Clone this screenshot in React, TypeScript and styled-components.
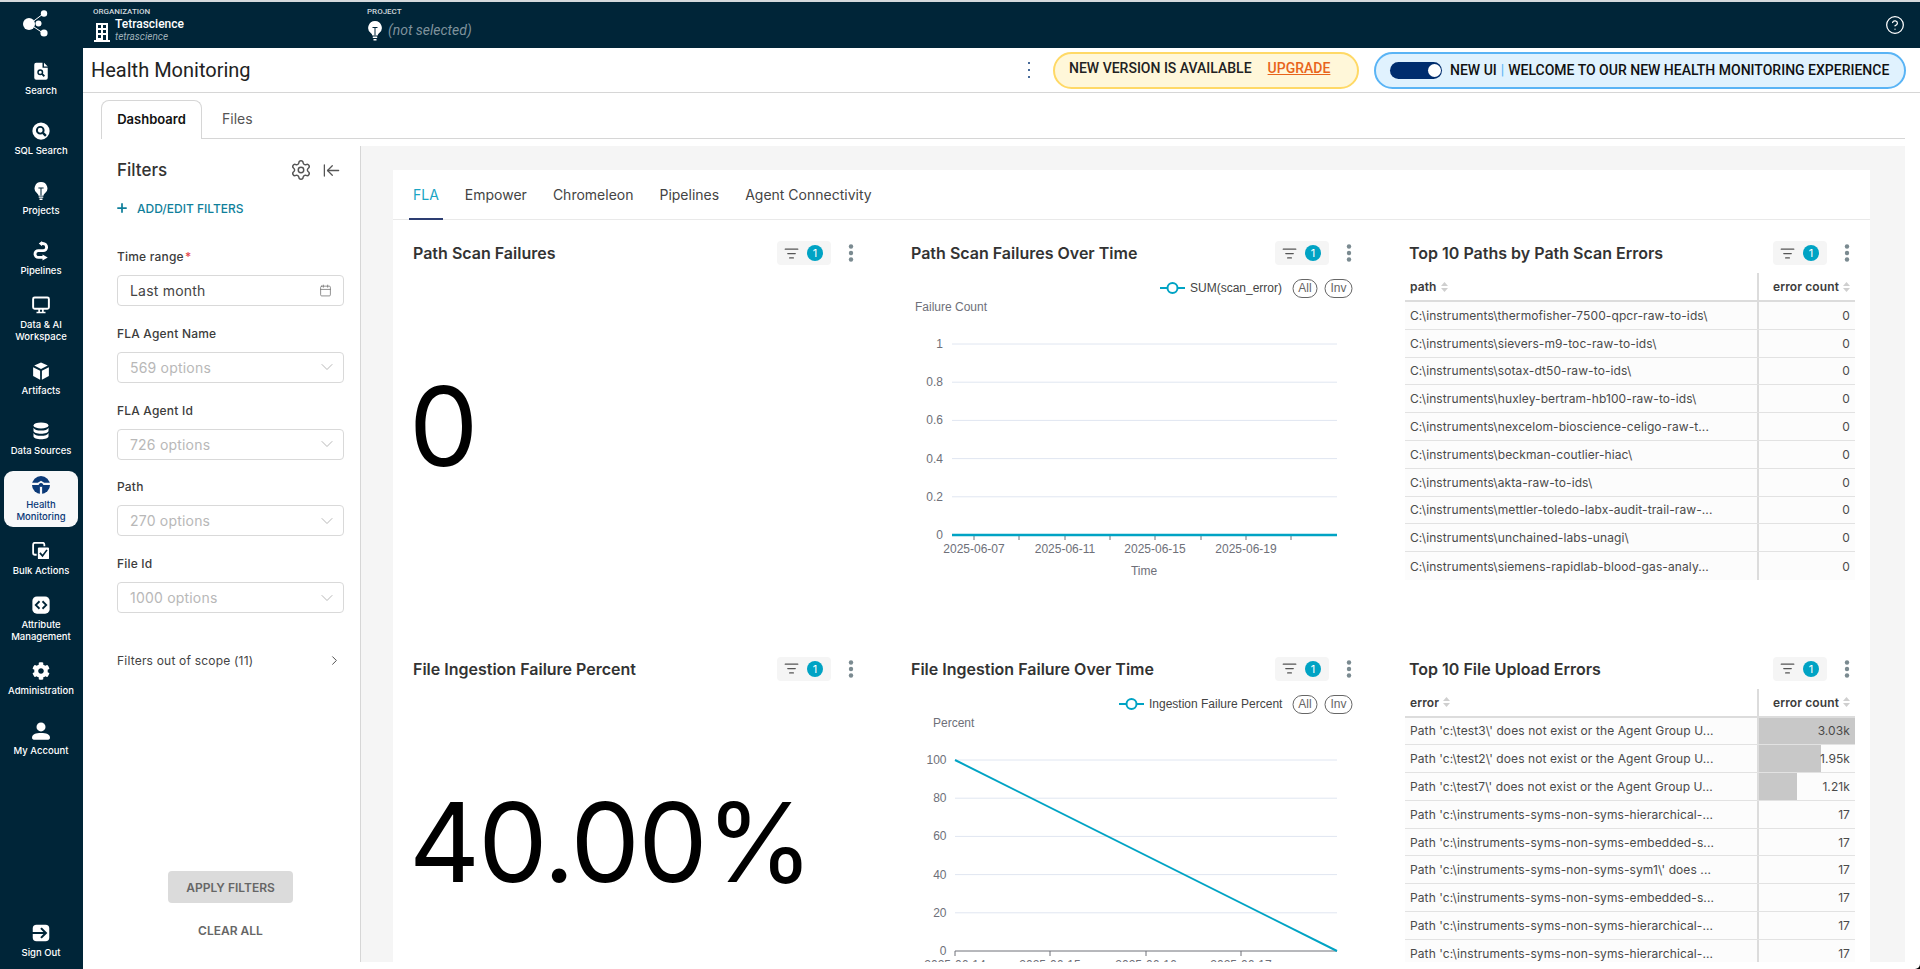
import styled, { createGlobalStyle } from "styled-components"
import { ArrowLeftToLine, Calendar, ChevronDown, ChevronRight, CircleHelp, ListFilter, Plus, Settings } from "lucide-react"
import { FaCog } from "react-icons/fa"

const NAVY = "#002538"
const TEAL = "#00a3c4"

const GlobalStyle = createGlobalStyle`
html, body {
    margin: 0;
    padding: 0;
    height: 100%;
    background: #000;
    overflow: hidden;
}
body {
    font-family: Inter, "Liberation Sans", sans-serif;
    color: #333;
}
* {
    box-sizing: border-box;
}
`

const Shell = styled.div`
display: flex;
height: 969px;
width: 1920px;
background: #fff;
border-top: 2px solid #d5d9dc;
border-bottom-right-radius: 5px;
overflow: hidden;
`

/* sidebar */

const Sidebar = styled.nav`
width: 83px;
flex: none;
background: ${NAVY};
display: flex;
flex-direction: column;
`

const Logo = styled.div`
height: 47px;
flex: none;
display: flex;
align-items: center;
justify-content: center;
padding: 0 4px 4px 0;
`

const NavItem = styled.a<{ $active?: boolean; $bottom?: boolean }>`
flex: none;
width: 74px;
height: 56px;
margin: 2px 4px;
margin-top: ${p => p.$bottom ? "auto" : "2px"};
margin-bottom: ${p => p.$bottom ? "0" : "2px"};
border-radius: 9px;
display: flex;
flex-direction: column;
align-items: center;
justify-content: center;
gap: 5px;
background: ${p => p.$active ? "#f7f8f9" : "transparent"};
color: ${p => p.$active ? "#0b3a78" : "#fff"};
svg {
    flex: none;
    display: block;
}
`

const NavLabel = styled.span`
font-size: 9.5px;
line-height: 12px;
font-weight: 500;
text-align: center;
white-space: pre-line;
`

/* main column */

const Main = styled.div`
flex: 1;
min-width: 0;
display: flex;
flex-direction: column;
`

const TopBar = styled.header`
height: 46px;
flex: none;
background: ${NAVY};
display: flex;
align-items: stretch;
padding: 0 15px 0 10px;
color: #fff;
font-family: Roboto, sans-serif;
`

const TopGroup = styled.div<{ $width?: number }>`
width: ${p => p.$width ? p.$width + "px" : "auto"};
padding-top: 5px;
`

const TopCaption = styled.div`
font-size: 8px;
line-height: 9px;
font-weight: 500;
color: #cfd8dc;
`

const TopRow = styled.div`
display: flex;
align-items: center;
gap: 5px;
margin-top: 1px;
`

const TopIcon = styled.div`
display: flex;
padding: 4px 0 0 1px;
`

const OrgName = styled.div`
font-size: 12px;
line-height: 14px;
font-weight: 500;
`

const OrgSlug = styled.div`
font-size: 10px;
line-height: 11px;
font-style: italic;
color: #9fb0b9;
`

const NoProject = styled.div`
font-size: 14px;
font-style: italic;
color: #7f929c;
margin: 2px 0 0 1px;
`

const HelpButton = styled.div`
margin-left: auto;
align-self: center;
display: flex;
color: #fff;
`

const TitleBar = styled.div`
height: 45px;
flex: none;
border-bottom: 1px solid #d6d6d6;
display: flex;
align-items: center;
padding: 0 14px 0 8px;
font-family: Roboto, sans-serif;
`

const PageTitle = styled.h1`
margin: 0;
font-size: 20px;
font-weight: 400;
color: #222;
`

const TitleKebab = styled.div`
margin-left: auto;
margin-right: 20px;
display: flex;
`

const VersionPill = styled.div`
width: 306px;
height: 37px;
border-radius: 19px;
border: 2px solid #ffd966;
background: #fff7d9;
display: flex;
align-items: center;
padding: 0 0 4px 14px;
font-size: 14px;
font-weight: 500;
color: #222;
`

const UpgradeLink = styled.span`
color: #e8641b;
text-decoration: underline;
margin-left: 16px;
`

const WelcomePill = styled.div`
width: 532px;
height: 37px;
margin-left: 15px;
border-radius: 19px;
border: 2px solid #5ab4f5;
background: #e0f2fe;
display: flex;
align-items: center;
padding-left: 14px;
font-size: 14px;
font-weight: 500;
color: #111;
white-space: nowrap;
`

const Toggle = styled.div`
width: 52px;
height: 17px;
border-radius: 9px;
background: #002d6e;
display: flex;
justify-content: flex-end;
align-items: center;
padding-right: 1px;
margin-right: 8px;
`

const ToggleKnob = styled.div`
width: 13px;
height: 13px;
border-radius: 50%;
background: #fff;
`

const PillDivider = styled.span`
color: #5ab4f5;
font-weight: 400;
margin: 0 4px;
`

/* dashboard tabs */

const PageTabs = styled.div`
flex: none;
height: 39px;
margin: 7px 15px 0 18px;
display: flex;
align-items: stretch;
border-bottom: 1px solid #d6d6d6;
`

const PageTab = styled.div<{ $active?: boolean }>`
width: ${p => p.$active ? "101px" : "auto"};
height: ${p => p.$active ? "39px" : "auto"};
display: flex;
align-items: center;
justify-content: center;
padding-bottom: 2px;
font-size: ${p => p.$active ? "13px" : "14px"};
margin-left: ${p => p.$active ? "0" : "20px"};
font-weight: ${p => p.$active ? 600 : 400};
color: ${p => p.$active ? "#111" : "#555"};
background: #fff;
border: ${p => p.$active ? "1px solid #d6d6d6" : "none"};
border-bottom: none;
border-radius: 8px 8px 0 0;
`

const Body = styled.div`
flex: 1;
min-height: 0;
margin: 7px 15px 7px 0;
display: flex;
overflow: hidden;
`

/* filter panel */

const FilterPanel = styled.aside`
width: 278px;
flex: none;
border-right: 1px solid #d6d6d6;
padding: 12px 16px 23px 34px;
display: flex;
flex-direction: column;
`

const FilterHead = styled.div`
display: flex;
align-items: center;
height: 24px;
padding-right: 3px;
color: #555;
`

const FilterTitle = styled.div`
font-size: 17px;
font-weight: 500;
color: #333;
margin-right: auto;
`

const HeadIcon = styled.div`
display: flex;
margin-left: 10px;
`

const AddFilters = styled.div`
display: flex;
align-items: center;
gap: 8px;
height: 16px;
margin: 18px 0 0 -2px;
font-size: 12px;
font-weight: 500;
color: #0f7f9b;
`

const FilterField = styled.div<{ $first?: boolean }>`
margin-top: ${p => p.$first ? "33px" : "19.75px"};
`

const FieldLabel = styled.div`
font-size: 12px;
line-height: 16px;
font-weight: 500;
letter-spacing: 0.2px;
color: #3c3c3c;
margin-bottom: 10px;
`

const Required = styled.span`
color: #e5484d;
margin-left: 1px;
`

const SelectBox = styled.div<{ $muted?: boolean }>`
height: 31px;
border: 1px solid #d9d9d9;
border-radius: 4px;
display: flex;
align-items: center;
justify-content: space-between;
padding: 0 ${p => p.$muted ? "6px" : "11px"} 0 12px;
font-size: 14px;
letter-spacing: 0.2px;
color: ${p => p.$muted ? "#b8b8b8" : "#444"};
svg {
    color: ${p => p.$muted ? "#b8b8b8" : "#777"};
}
`

const ScopeRow = styled.div`
display: flex;
align-items: center;
justify-content: space-between;
height: 16px;
margin-top: 39px;
padding-right: 2px;
font-size: 12px;
letter-spacing: 0.2px;
color: #444;
`

const ApplyButton = styled.div`
width: 125px;
height: 32px;
margin: auto auto 0;
border-radius: 4px;
background: #dbdbdb;
color: #666;
font-size: 12px;
font-weight: 600;
display: flex;
align-items: center;
justify-content: center;
`

const ClearButton = styled.div`
margin-top: 20px;
text-align: center;
font-size: 12px;
line-height: 16px;
font-weight: 600;
color: #666;
`

/* report area */

const Report = styled.main`
flex: 1;
min-width: 0;
background: #f5f5f5;
padding: 24px 35px 0 32px;
`

const Card = styled.div`
height: 100%;
background: #fff;
overflow: hidden;
`

const CardTabs = styled.div`
height: 50px;
border-bottom: 1px solid #e9e9e9;
padding-left: 16px;
display: flex;
gap: 18px;
`

const CardTab = styled.div<{ $active?: boolean }>`
height: 50px;
padding: 1px 4px 0;
display: flex;
align-items: center;
font-size: 14px;
color: ${p => p.$active ? "#1aa5c4" : "#444"};
border-bottom: 2px solid ${p => p.$active ? "#2d3e72" : "transparent"};
`

const Grid = styled.div`
display: grid;
grid-template-columns: repeat(3, 450px);
grid-auto-rows: 415.5px;
column-gap: 48px;
padding: 21px 0 0 16px;
`

const Panel = styled.section`
min-width: 0;
`

const PanelHead = styled.div`
height: 24px;
display: flex;
align-items: center;
padding-left: 4px;
`

const PanelTitle = styled.h3`
margin: 0 auto 0 0;
font-size: 16px;
font-weight: 600;
color: #333;
`

const FilterChip = styled.div`
width: 54px;
height: 24px;
border-radius: 4px;
background: #f5f5f5;
display: flex;
align-items: center;
justify-content: space-between;
padding: 0 8px 0 7px;
color: #555;
margin-right: 12px;
`

const ChipBadge = styled.div`
width: 16px;
height: 16px;
border-radius: 50%;
background: ${TEAL};
color: #fff;
font-size: 11px;
display: flex;
align-items: center;
justify-content: center;
`

const PanelKebab = styled.div`
width: 16px;
display: flex;
justify-content: center;
`

const BigNumber = styled.div`
height: 322px;
display: flex;
align-items: center;
font-size: 110px;
font-weight: 400;
letter-spacing: -1.7px;
color: #000;
`

const ChartSvg = styled.svg`
display: block;
margin-top: 5px;
font-family: "Liberation Sans", Arial, sans-serif;
font-size: 12px;
`

const Table = styled.div`
margin-top: 8px;
font-size: 12px;
color: #4a4a4a;
`

const HeadRow = styled.div`
display: grid;
grid-template-columns: 352px 98px;
height: 29px;
border-bottom: 2px solid #dcdcdc;
font-weight: 600;
color: #3c3c3c;
`

const BodyRow = styled.div`
display: grid;
grid-template-columns: 352px 98px;
height: 27.8px;
border-bottom: 1px solid #e2e2e2;
background: #fcfcfc;
&:last-child {
    border-bottom: none;
}
`

const NameCell = styled.div`
display: flex;
align-items: center;
gap: 4px;
padding-left: 5px;
white-space: nowrap;
overflow: hidden;
letter-spacing: 0.1px;
`

const ValueCell = styled.div`
position: relative;
display: flex;
align-items: center;
justify-content: flex-end;
gap: 4px;
padding-right: 5px;
border-left: 2px solid #dcdcdc;
letter-spacing: 0.1px;
`

const ValueBar = styled.div`
position: absolute;
left: 0;
top: 0;
bottom: 0;
background: #c8c8c8;
`

const ValueText = styled.span`
position: relative;
`

/* icons */

const LogoIcon = () => (
    <svg width="34" height="28" viewBox="0 0 34 28" fill="#fff">
        <circle cx="6" cy="14" r="6" />
        <circle cx="21" cy="3.5" r="3.2" />
        <circle cx="15.5" cy="13.5" r="3" />
        <circle cx="21" cy="23" r="3.6" />
        <path d="M8 13l12-9M8 15l12 8" stroke="#fff" strokeWidth="1" />
    </svg>
)

const navIcons: Record<string, React.ReactNode> = {
    search: (
        <svg width="18" height="18" viewBox="0 0 24 24">
            <path fill="#fff" d="M3 3.5A2.5 2.5 0 0 1 5.500 1H14v6.500h7V21a2.500 2.500 0 0 1-2.500 2.500h-13A2.500 2.500 0 0 1 3 21z" />
            <path fill="#fff" d="M16 1l5 5h-5z" />
            <circle cx="11" cy="13.500" r="3" fill="none" stroke={NAVY} strokeWidth="2" />
            <path d="M13.200 15.700l3.300 3.300" stroke={NAVY} strokeWidth="2.400" />
        </svg>
    ),
    sql: (
        <svg width="18" height="18" viewBox="0 0 24 24">
            <circle cx="12" cy="12" r="11.500" fill="#fff" />
            <circle cx="11" cy="11" r="4.500" fill="none" stroke={NAVY} strokeWidth="2.600" />
            <path d="M14.500 14.500l4 4" stroke={NAVY} strokeWidth="3" />
        </svg>
    ),
    bulb: (
        <svg width="18" height="18" viewBox="0 0 24 24">
            <path fill="#fff" d="M12 0a8.500 8.500 0 0 0-5 15.400c1 .8 1.600 1.700 1.700 2.800h6.600c.1-1.100.7-2 1.700-2.800A8.500 8.500 0 0 0 12 0z" />
            <path d="M8.500 8h7M12 8v10" stroke={NAVY} strokeWidth="1.400" fill="none" />
            <path d="M9 20.200h6M10 23h4" stroke="#fff" strokeWidth="1.800" />
        </svg>
    ),
    pipelines: (
        <svg width="18" height="18" viewBox="0 0 24 24" style={{ overflow: "visible" }}>
            <path d="M12 2h2.500a5 5 0 0 1 5 5 4.500 4.500 0 0 1-4.500 4.500H8.500a4.500 4.500 0 0 0 0 9H15" fill="none" stroke="#fff" strokeWidth="3.800" />
            <path fill="#fff" d="M13.500-1.500L9 2l4.500 3.500zM14 16.500l7 4-7 4z" />
        </svg>
    ),
    monitor: (
        <svg width="18" height="18" viewBox="0 0 24 24">
            <rect x="1.500" y="2" width="21" height="15" rx="2" fill="none" stroke="#fff" strokeWidth="2.600" />
            <path d="M9.500 17v4M14.500 17v4M6 22h12" stroke="#fff" strokeWidth="2.200" />
        </svg>
    ),
    cube: (
        <svg width="18" height="18" viewBox="0 0 24 24" fill="#fff">
            <path d="M12 .5l9 4.300-9 4.400-9-4.400z" />
            <path d="M1.500 7l9.300 4.600V23.500L1.500 18.500z" />
            <path d="M22.500 7l-9.300 4.600V23.500l9.300-5z" />
        </svg>
    ),
    database: (
        <svg width="18" height="18" viewBox="0 0 24 24" fill="#fff">
            <ellipse cx="12" cy="4.500" rx="10" ry="4" />
            <path d="M2 7.500c1 2.500 5 3.800 10 3.800s9-1.300 10-3.800v4c0 2.400-4.500 4-10 4s-10-1.600-10-4z" />
            <path d="M2 14.500c1 2.500 5 3.800 10 3.800s9-1.300 10-3.800v4.500c0 2.400-4.500 4-10 4s-10-1.600-10-4z" />
        </svg>
    ),
    health: (
        <svg width="18" height="18" viewBox="0 0 24 24">
            <circle cx="12" cy="12" r="12" fill="#0b3a78" />
            <path d="M0 10.500h8l4-2.500 4 2.500h8M12 13v11" fill="none" stroke="#f7f8f9" strokeWidth="3" />
            <circle cx="12" cy="12" r="2.800" fill="#0b3a78" />
        </svg>
    ),
    bulk: (
        <svg width="18" height="18" viewBox="0 0 24 24">
            <rect x="1.500" y="1" width="15" height="16" rx="2.500" fill="none" stroke="#fff" strokeWidth="2.400" />
            <rect x="7" y="6.500" width="16.500" height="17" rx="2" fill="#fff" stroke={NAVY} strokeWidth="1.600" />
            <path d="M10.500 14.500l3.500 4 6-8" fill="none" stroke={NAVY} strokeWidth="2.200" />
        </svg>
    ),
    attribute: (
        <svg width="18" height="18" viewBox="0 0 24 24">
            <rect x="0.500" y="0.500" width="23" height="23" rx="6" fill="#fff" />
            <path d="M10 7l-5 5 5 5M14 7l5 5-5 5" fill="none" stroke={NAVY} strokeWidth="2.400" />
        </svg>
    ),
    user: (
        <svg width="18" height="18" viewBox="0 0 24 24" fill="#fff">
            <circle cx="12" cy="6.500" r="6" />
            <path d="M0 21c0-5 5-6.500 12-6.500S24 16 24 21c0 1.500-1 2.500-2.500 2.500h-19C1 23.500 0 22.500 0 21z" />
        </svg>
    ),
    signout: (
        <svg width="18" height="18" viewBox="0 0 24 24">
            <rect x="1" y="1" width="22" height="22" rx="5" fill="#fff" />
            <path d="M0 12h18M12 5.500l6.500 6.500-6.500 6.500" fill="none" stroke={NAVY} strokeWidth="2.800" />
        </svg>
    ),
}

const BuildingIcon = () => (
    <svg width="16" height="20" viewBox="0 0 16 20">
        <path fill="#fff" d="M2 1h12v17H2z" />
        <path fill={NAVY} d="M4 3h3v3H4zM9 3h3v3H9zM4 8h3v3H4zM9 8h3v3H9zM4 13h3v3H4zM9 13h3v5H9z" />
        <path d="M0 19h16" stroke="#fff" strokeWidth="2" />
    </svg>
)

const ProjectBulb = () => (
    <svg width="14" height="20" viewBox="0 0 14 20">
        <path fill="#fff" d="M7 0a6.800 6.800 0 0 0-4 12.300c.8.600 1.200 1.300 1.300 2.200h5.400c.1-.9.500-1.600 1.300-2.200A6.800 6.800 0 0 0 7 0z" />
        <path d="M4.500 6.500h5M7 6.500v8" stroke={NAVY} strokeWidth="1" fill="none" />
        <path d="M4.800 16.300h4.400M5.500 18.800h3" stroke="#fff" strokeWidth="1.400" />
    </svg>
)

const KebabDots = ({ size = 2.2, gap = 6.5, color = "#7a8a90" }: { size?: number; gap?: number; color?: string }) => (
    <svg width="8" height="20" viewBox="0 0 8 20" fill={color}>
        <circle cx="4" cy={10 - gap} r={size} />
        <circle cx="4" cy="10" r={size} />
        <circle cx="4" cy={10 + gap} r={size} />
    </svg>
)

const SortIcon = () => (
    <svg width="7" height="10" viewBox="0 0 7 10" fill="#cfcfcf">
        <path d="M3.500 0L7 4H0zM3.500 10L0 6h7z" />
    </svg>
)

/* chart */

interface ChartConfig {
    yName: string
    yNameX: number
    yLabelX: number
    yLabels: string[]
    left: number
    legend: string
    legendX: number
    ticks: number[]
    dates: { x: number; label: string }[]
    xName?: string
    line: string
    lineWidth: number
}

const CHART_TOP = 74
const CHART_BOTTOM = 265
const CHART_RIGHT = 430

function LineChart({ config }: { config: ChartConfig }) {
    const step = (CHART_BOTTOM - CHART_TOP) / (config.yLabels.length - 1)
    return (
        <ChartSvg width="450" height="310" viewBox="0 0 450 310">
            <line x1={config.legendX} x2={config.legendX + 25} y1="18" y2="18" stroke={TEAL} strokeWidth="2" />
            <circle cx={config.legendX + 12.5} cy="18" r="5" fill="#fff" stroke={TEAL} strokeWidth="2" />
            <text x={config.legendX + 30} y="22" fill="#444">{config.legend}</text>
            <rect x="386" y="9.500" width="24" height="18" rx="9" fill="#fff" stroke="#666" />
            <text x="398" y="22" fill="#666" textAnchor="middle">All</text>
            <rect x="418" y="9.500" width="27" height="18" rx="9" fill="#fff" stroke="#666" />
            <text x="431.5" y="22" fill="#666" textAnchor="middle">Inv</text>
            <text x={config.yNameX} y="41" fill="#6e7079">{config.yName}</text>
            {config.yLabels.map((label, i) => {
                const y = CHART_TOP + step * i
                return (
                    <g key={label}>
                        {i < config.yLabels.length - 1 && (
                            <line x1={config.left} x2={CHART_RIGHT} y1={y} y2={y} stroke="#e0e6f1" />
                        )}
                        <text x={config.yLabelX} y={y + 4} fill="#6e7079" textAnchor="end">{label}</text>
                    </g>
                )
            })}
            <line x1={config.left} x2={CHART_RIGHT} y1={CHART_BOTTOM} y2={CHART_BOTTOM} stroke="#6e7079" />
            {config.ticks.map(x => (
                <line key={x} x1={x} x2={x} y1={CHART_BOTTOM} y2={CHART_BOTTOM + 5} stroke="#6e7079" />
            ))}
            {config.dates.map(d => (
                <text key={d.label} x={d.x} y="283" fill="#6e7079" textAnchor="middle">{d.label}</text>
            ))}
            {config.xName && <text x="237" y="305" fill="#6e7079" textAnchor="middle">{config.xName}</text>}
            <path d={config.line} fill="none" stroke={TEAL} strokeWidth={config.lineWidth} />
        </ChartSvg>
    )
}

const scanChart: ChartConfig = {
    yName: "Failure Count",
    yNameX: 8,
    yLabelX: 36,
    yLabels: ["1", "0.8", "0.6", "0.4", "0.2", "0"],
    left: 45,
    legend: "SUM(scan_error)",
    legendX: 253,
    ticks: [67, 112, 158, 203, 248, 294, 339, 384],
    dates: [
        { x: 67, label: "2025-06-07" },
        { x: 158, label: "2025-06-11" },
        { x: 248, label: "2025-06-15" },
        { x: 339, label: "2025-06-19" },
    ],
    xName: "Time",
    line: "M45 265H430",
    lineWidth: 2.5,
}

const ingestionChart: ChartConfig = {
    yName: "Percent",
    yNameX: 26,
    yLabelX: 39.5,
    yLabels: ["100", "80", "60", "40", "20", "0"],
    left: 48,
    legend: "Ingestion Failure Percent",
    legendX: 212,
    ticks: [48, 143, 239, 334],
    dates: [
        { x: 48, label: "2025-06-14" },
        { x: 143, label: "2025-06-15" },
        { x: 239, label: "2025-06-16" },
        { x: 334, label: "2025-06-17" },
    ],
    line: "M48 74L430 265",
    lineWidth: 2,
}

/* data */

const pathRows = [
    "C:\\instruments\\thermofisher-7500-qpcr-raw-to-ids\\",
    "C:\\instruments\\sievers-m9-toc-raw-to-ids\\",
    "C:\\instruments\\sotax-dt50-raw-to-ids\\",
    "C:\\instruments\\huxley-bertram-hb100-raw-to-ids\\",
    "C:\\instruments\\nexcelom-bioscience-celigo-raw-t...",
    "C:\\instruments\\beckman-coutlier-hiac\\",
    "C:\\instruments\\akta-raw-to-ids\\",
    "C:\\instruments\\mettler-toledo-labx-audit-trail-raw-...",
    "C:\\instruments\\unchained-labs-unagi\\",
    "C:\\instruments\\siemens-rapidlab-blood-gas-analy...",
].map(name => ({ name, value: "0", count: 0 }))

const uploadRows = [
    { name: "Path 'c:\\test3\\' does not exist or the Agent Group U...", value: "3.03k", count: 3030 },
    { name: "Path 'c:\\test2\\' does not exist or the Agent Group U...", value: "1.95k", count: 1950 },
    { name: "Path 'c:\\test7\\' does not exist or the Agent Group U...", value: "1.21k", count: 1210 },
    { name: "Path 'c:\\instruments-syms-non-syms-hierarchical-...", value: "17", count: 0 },
    { name: "Path 'c:\\instruments-syms-non-syms-embedded-s...", value: "17", count: 0 },
    { name: "Path 'c:\\instruments-syms-non-syms-sym1\\' does ...", value: "17", count: 0 },
    { name: "Path 'c:\\instruments-syms-non-syms-embedded-s...", value: "17", count: 0 },
    { name: "Path 'c:\\instruments-syms-non-syms-hierarchical-...", value: "17", count: 0 },
    { name: "Path 'c:\\instruments-syms-non-syms-hierarchical-...", value: "17", count: 0 },
]

const navItems = [
    { icon: "search", label: "Search" },
    { icon: "sql", label: "SQL Search" },
    { icon: "bulb", label: "Projects" },
    { icon: "pipelines", label: "Pipelines" },
    { icon: "monitor", label: "Data & AI\nWorkspace" },
    { icon: "cube", label: "Artifacts" },
    { icon: "database", label: "Data Sources" },
    { icon: "health", label: "Health\nMonitoring", active: true },
    { icon: "bulk", label: "Bulk Actions" },
    { icon: "attribute", label: "Attribute\nManagement" },
]

const filterFields = [
    { label: "FLA Agent Name", value: "569 options" },
    { label: "FLA Agent Id", value: "726 options" },
    { label: "Path", value: "270 options" },
    { label: "File Id", value: "1000 options" },
]

const cardTabs = ["FLA", "Empower", "Chromeleon", "Pipelines", "Agent Connectivity"]

function PanelHeader({ title }: { title: string }) {
    return (
        <PanelHead>
            <PanelTitle>{title}</PanelTitle>
            <FilterChip>
                <ListFilter size={15} strokeWidth={2} />
                <ChipBadge>1</ChipBadge>
            </FilterChip>
            <PanelKebab><KebabDots /></PanelKebab>
        </PanelHead>
    )
}

function DataTable({ column, rows }: { column: string; rows: { name: string; value: string; count: number }[] }) {
    const max = Math.max(...rows.map(r => r.count), 1)
    return (
        <Table>
            <HeadRow>
                <NameCell>{column} <SortIcon /></NameCell>
                <ValueCell>error count <SortIcon /></ValueCell>
            </HeadRow>
            {rows.map((row, i) => (
                <BodyRow key={i}>
                    <NameCell>{row.name}</NameCell>
                    <ValueCell>
                        {row.count > 0 && <ValueBar style={{ width: `${(row.count / max) * 100}%` }} />}
                        <ValueText>{row.value}</ValueText>
                    </ValueCell>
                </BodyRow>
            ))}
        </Table>
    )
}

export default function App() {
    return (
        <>
            <GlobalStyle />
            <Shell>
                <Sidebar>
                    <Logo><LogoIcon /></Logo>
                    {navItems.map(item => (
                        <NavItem key={item.icon} $active={item.active}>
                            {navIcons[item.icon]}
                            <NavLabel>{item.label}</NavLabel>
                        </NavItem>
                    ))}
                    <NavItem>
                        <FaCog size={18} />
                        <NavLabel>Administration</NavLabel>
                    </NavItem>
                    <NavItem>
                        {navIcons.user}
                        <NavLabel>My Account</NavLabel>
                    </NavItem>
                    <NavItem $bottom>
                        {navIcons.signout}
                        <NavLabel>Sign Out</NavLabel>
                    </NavItem>
                </Sidebar>
                <Main>
                    <TopBar>
                        <TopGroup $width={274}>
                            <TopCaption>ORGANIZATION</TopCaption>
                            <TopRow>
                                <TopIcon><BuildingIcon /></TopIcon>
                                <div>
                                    <OrgName>Tetrascience</OrgName>
                                    <OrgSlug>tetrascience</OrgSlug>
                                </div>
                            </TopRow>
                        </TopGroup>
                        <TopGroup>
                            <TopCaption>PROJECT</TopCaption>
                            <TopRow>
                                <TopIcon><ProjectBulb /></TopIcon>
                                <NoProject>(not selected)</NoProject>
                            </TopRow>
                        </TopGroup>
                        <HelpButton><CircleHelp size={20} strokeWidth={1.5} /></HelpButton>
                    </TopBar>
                    <TitleBar>
                        <PageTitle>Health Monitoring</PageTitle>
                        <TitleKebab><KebabDots size={1} gap={7} color="#0b3a78" /></TitleKebab>
                        <VersionPill>
                            NEW VERSION IS AVAILABLE
                            <UpgradeLink>UPGRADE</UpgradeLink>
                        </VersionPill>
                        <WelcomePill>
                            <Toggle><ToggleKnob /></Toggle>
                            NEW UI
                            <PillDivider>|</PillDivider>
                            WELCOME TO OUR NEW HEALTH MONITORING EXPERIENCE
                        </WelcomePill>
                    </TitleBar>
                    <PageTabs>
                        <PageTab $active>Dashboard</PageTab>
                        <PageTab>Files</PageTab>
                    </PageTabs>
                    <Body>
                        <FilterPanel>
                            <FilterHead>
                                <FilterTitle>Filters</FilterTitle>
                                <HeadIcon><Settings size={22} strokeWidth={1.6} /></HeadIcon>
                                <HeadIcon><ArrowLeftToLine size={19} strokeWidth={1.6} /></HeadIcon>
                            </FilterHead>
                            <AddFilters>
                                <Plus size={14} strokeWidth={3} />
                                ADD/EDIT FILTERS
                            </AddFilters>
                            <FilterField $first>
                                <FieldLabel>Time range<Required>*</Required></FieldLabel>
                                <SelectBox>
                                    Last month
                                    <Calendar size={13} strokeWidth={1.5} />
                                </SelectBox>
                            </FilterField>
                            {filterFields.map(field => (
                                <FilterField key={field.label}>
                                    <FieldLabel>{field.label}</FieldLabel>
                                    <SelectBox $muted>
                                        {field.value}
                                        <ChevronDown size={20} strokeWidth={1.2} />
                                    </SelectBox>
                                </FilterField>
                            ))}
                            <ScopeRow>
                                Filters out of scope (11)
                                <ChevronRight size={15} strokeWidth={1.5} />
                            </ScopeRow>
                            <ApplyButton>APPLY FILTERS</ApplyButton>
                            <ClearButton>CLEAR ALL</ClearButton>
                        </FilterPanel>
                        <Report>
                            <Card>
                                <CardTabs>
                                    {cardTabs.map((tab, i) => (
                                        <CardTab key={tab} $active={i === 0}>{tab}</CardTab>
                                    ))}
                                </CardTabs>
                                <Grid>
                                    <Panel>
                                        <PanelHeader title="Path Scan Failures" />
                                        <BigNumber>0</BigNumber>
                                    </Panel>
                                    <Panel>
                                        <PanelHeader title="Path Scan Failures Over Time" />
                                        <LineChart config={scanChart} />
                                    </Panel>
                                    <Panel>
                                        <PanelHeader title="Top 10 Paths by Path Scan Errors" />
                                        <DataTable column="path" rows={pathRows} />
                                    </Panel>
                                    <Panel>
                                        <PanelHeader title="File Ingestion Failure Percent" />
                                        <BigNumber>40.00%</BigNumber>
                                    </Panel>
                                    <Panel>
                                        <PanelHeader title="File Ingestion Failure Over Time" />
                                        <LineChart config={ingestionChart} />
                                    </Panel>
                                    <Panel>
                                        <PanelHeader title="Top 10 File Upload Errors" />
                                        <DataTable column="error" rows={uploadRows} />
                                    </Panel>
                                </Grid>
                            </Card>
                        </Report>
                    </Body>
                </Main>
            </Shell>
        </>
    )
}
